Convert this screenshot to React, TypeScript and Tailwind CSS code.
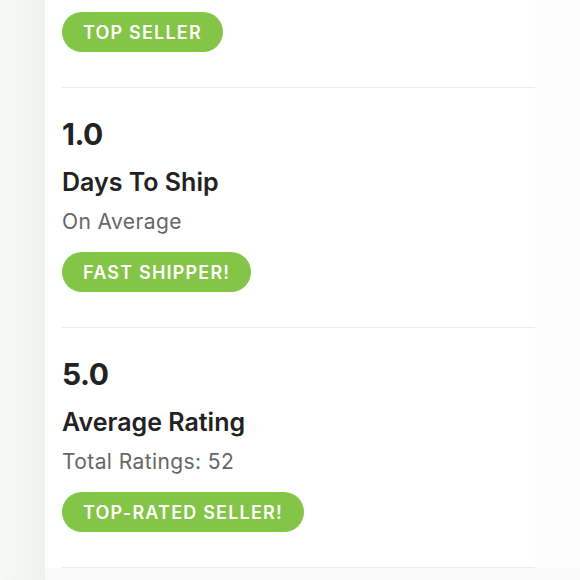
import React from "react";

interface StatProps {
  value: string;
  title: string;
  subtitle: string;
  badge: string;
}

function Badge({ children }: { children: React.ReactNode }) {
  return (
    <span className="inline-flex h-10 items-center rounded-full bg-[#84c446] px-[21px] text-[18px] font-semibold uppercase tracking-[1.2px] text-white">
      {children}
    </span>
  );
}

function Stat({ value, title, subtitle, badge }: StatProps) {
  return (
    <div className="border-b border-[#ececec] pt-[28px] pb-[35px]">
      <div className="text-[30px] font-bold leading-[36px] tracking-[-0.5px] text-[#222]">
        {value}
      </div>
      <div className="mt-[14px] text-[25px] font-semibold leading-[32px] text-[#222]">
        {title}
      </div>
      <div className="mt-[11px] text-[21px] leading-[26px] tracking-[0.4px] text-[#666]">
        {subtitle}
      </div>
      <div className="mt-[17px]">
        <Badge>{badge}</Badge>
      </div>
    </div>
  );
}

export default function App() {
  return (
    <div
      className="flex h-[580px] w-[580px] overflow-hidden bg-[#f9f9f9]"
      style={{ fontFamily: "Inter, 'Noto Sans', sans-serif" }}
    >
      <div className="w-[45px] shrink-0 bg-gradient-to-r from-[#f7f9f5] to-[#eef1ec]" />
      <div className="flex flex-1 flex-col">
        <div className="flex bg-white">
          <div className="w-[490px] shrink-0 pl-[17px]">
            <div className="border-b border-[#ececec] pt-[12px] pb-[35px]">
              <Badge>Top Seller</Badge>
            </div>
            <Stat value="1.0" title="Days To Ship" subtitle="On Average" badge="Fast Shipper!" />
            <Stat
              value="5.0"
              title="Average Rating"
              subtitle="Total Ratings: 52"
              badge="Top-Rated Seller!"
            />
          </div>
          <div className="flex-1 bg-[#fdfdfd]" />
        </div>
      </div>
    </div>
  );
}
